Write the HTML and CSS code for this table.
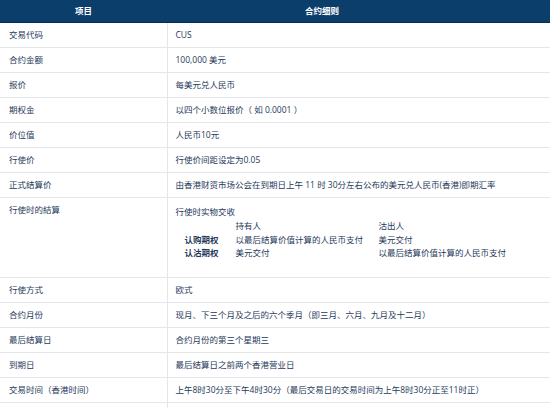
FILE: index.html
```html
<!DOCTYPE html>
<html lang="zh-CN">
<head>
<meta charset="utf-8">
<link rel="stylesheet" href="styles.css">
</head>
<body>
<table class="spec">
  <thead>
    <tr><th class="h-item">项目</th><th class="h-rule">合约细则</th></tr>
  </thead>
  <tbody>
    <tr><td class="k">交易代码</td><td>CUS</td></tr>
    <tr><td class="k">合约金额</td><td>100,000 美元</td></tr>
    <tr><td class="k">报价</td><td>每美元兑人民币</td></tr>
    <tr><td class="k">期权金</td><td>以四个小数位报价（ 如 0.0001 ）</td></tr>
    <tr><td class="k">价位值</td><td>人民币10元</td></tr>
    <tr><td class="k">行使价</td><td>行使价间距设定为0.05</td></tr>
    <tr><td class="k">正式结算价</td><td>由香港财资市场公会在到期日上午 11 时 30分左右公布的美元兑人民币(香港)即期汇率</td></tr>
    <tr class="tall">
      <td class="k">行使时的結算</td>
      <td>
        <div class="line">行使时实物交收</div>
        <div class="sub">
          <span class="s1"></span><span class="s2">持有人</span><span class="s3">沽出人</span>
          <span class="s1 b">认购期权</span><span class="s2">以最后结算价值计算的人民币支付</span><span class="s3">美元交付</span>
          <span class="s1 b">认沽期权</span><span class="s2">美元交付</span><span class="s3">以最后结算价值计算的人民币支付</span>
        </div>
      </td>
    </tr>
    <tr><td class="k">行使方式</td><td>欧式</td></tr>
    <tr><td class="k">合约月份</td><td>现月、下三个月及之后的六个季月（即三月、六月、九月及十二月）</td></tr>
    <tr><td class="k">最后结算日</td><td>合约月份的第三个星期三</td></tr>
    <tr><td class="k">到期日</td><td>最后结算日之前两个香港营业日</td></tr>
    <tr><td class="k">交易时间（香港时间）</td><td>上午8时30分至下午4时30分（最后交易日的交易时间为上午8时30分正至11时正）</td></tr>
    <tr><td class="k">&nbsp;</td><td>&nbsp;</td></tr>
  </tbody>
</table>
</body>
</html>
```

FILE: styles.css
```css
html, body {
  margin: 0;
  padding: 0;
  background: #ffffff;
}
body {
  font-family: "Open Sans", "Noto Sans CJK SC", sans-serif;
  font-size: 8.5px;
  color: #26395a;
}
.spec {
  width: 550px;
  border-collapse: collapse;
  table-layout: fixed;
}
.spec th {
  background: #0c3e6c;
  color: #ffffff;
  font-weight: 700;
  font-size: 8.5px;
  height: 22px;
  padding: 0;
  line-height: 12px;
  border-bottom: 1px solid #052b52;
}
.h-item {
  width: 167px;
  text-align: center;
}
.h-rule {
  text-align: left;
  padding-left: 138px !important;
}
.spec td {
  padding: 6px 9px 6px 8px;
  line-height: 12px;
  height: 12px;
  border-bottom: 1px solid #e4e6ea;
  vertical-align: top;
  white-space: nowrap;
}
.spec td.k {
  padding-left: 9px;
  border-right: 1px solid #e4e6ea;
}
.tall td {
  height: 67px;
}
.line {
  line-height: 14px;
  margin-top: 1px;
}
.sub {
  display: grid;
  grid-template-columns: 51px 143px auto;
  line-height: 13.5px;
  padding-left: 9px;
}
.b {
  font-weight: 700;
}
```
